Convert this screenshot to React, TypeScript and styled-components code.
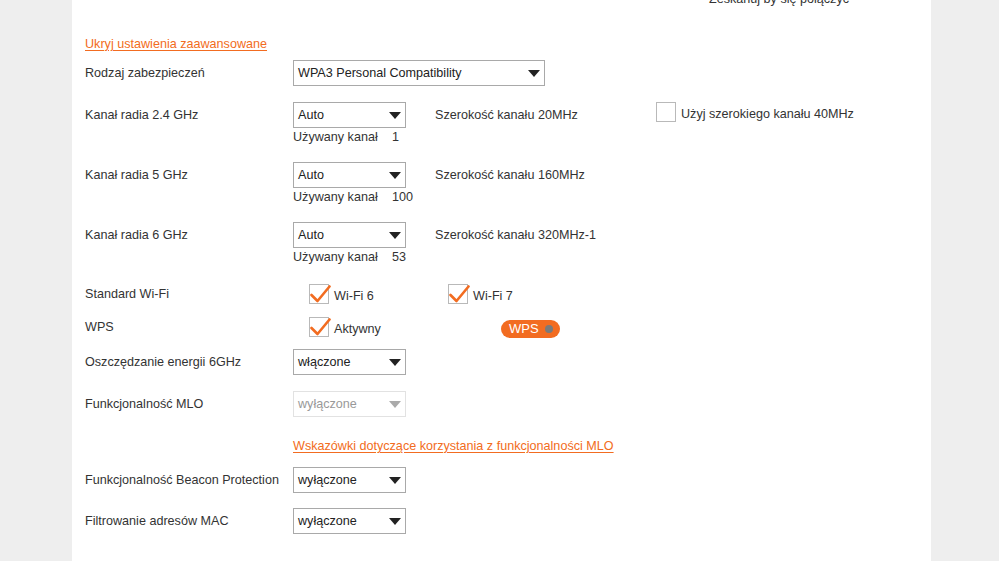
import { createGlobalStyle, styled } from "styled-components";

const orange = "#f26c21";
const text = "#333";

const GlobalStyle = createGlobalStyle`
  html, body {
    margin: 0;
    padding: 0;
    background: #eeeeee;
    overflow: hidden;
  }
  body {
    font-family: "Liberation Sans", Arial, sans-serif;
    font-size: 12.6px;
    color: ${text};
  }
`;

const Page = styled.div`
  height: 561px;
  display: flex;
`;

const Panel = styled.div`
  margin-left: 72px;
  width: 859px;
  height: 100%;
  background: #fff;
  padding-left: 13px;
  box-sizing: border-box;
  display: flex;
  flex-direction: column;
`;

const ScanHint = styled.div`
  margin-top: -10px;
  padding-left: 624px;
  line-height: 18px;
  white-space: nowrap;
`;

const Link = styled.a<{ $top: number; $indent?: number }>`
  margin-top: ${(p) => p.$top}px;
  margin-left: ${(p) => p.$indent ?? 0}px;
  line-height: 18px;
  color: ${orange};
  text-decoration: underline;
  text-underline-offset: 2px;
  cursor: pointer;
  align-self: flex-start;
`;

const Row = styled.div<{ $top: number }>`
  margin-top: ${(p) => p.$top}px;
  display: grid;
  grid-template-columns: 208px 142px 221px auto;
  align-items: start;
`;

const Label = styled.div`
  line-height: 26px;
  white-space: nowrap;
`;

const Cell = styled.div`
  display: flex;
  flex-direction: column;
`;

const Note = styled.div`
  line-height: 26px;
  white-space: nowrap;
`;

const Used = styled.div`
  line-height: 18px;
  display: flex;
  white-space: nowrap;
`;

const UsedLabel = styled.span`
  width: 99px;
`;

const SelectBox = styled.div<{ $width: number; $disabled?: boolean }>`
  width: ${(p) => p.$width}px;
  height: 26px;
  box-sizing: border-box;
  border: 1px solid ${(p) => (p.$disabled ? "#e2e2e2" : "#a9a9a9")};
  padding: 0 4px 0 4px;
  display: flex;
  align-items: center;
  justify-content: space-between;
  color: ${(p) => (p.$disabled ? "#999" : "#222")};
  background: #fff;
  cursor: ${(p) => (p.$disabled ? "default" : "pointer")};
`;

const Arrow = styled.span<{ $disabled?: boolean }>`
  width: 0;
  height: 0;
  border-left: 6px solid transparent;
  border-right: 6px solid transparent;
  border-top: 7px solid ${(p) => (p.$disabled ? "#aaa" : "#222")};
  margin-top: 1px;
`;

const Select = ({
  value,
  width = 113,
  disabled,
}: {
  value: string;
  width?: number;
  disabled?: boolean;
}) => (
  <SelectBox $width={width} $disabled={disabled}>
    <span>{value}</span>
    <Arrow $disabled={disabled} />
  </SelectBox>
);

const Options = styled.div<{ $second: number }>`
  grid-column: 2 / span 3;
  display: grid;
  grid-template-columns: ${(p) => p.$second}px auto;
  padding-left: 16px;
  align-items: center;
  height: 26px;
`;

const CheckLine = styled.label`
  display: flex;
  align-items: center;
  gap: 5px;
  white-space: nowrap;
`;

const CheckText = styled.span`
  margin-top: 3px;
`;

const Box = styled.span`
  width: 20px;
  height: 20px;
  box-sizing: border-box;
  border: 1px solid #b9b9b9;
  position: relative;
  flex-shrink: 0;
  background: #fff;
`;

const Tick = styled.svg`
  position: absolute;
  left: -1px;
  top: -2px;
`;

const Check = ({ label, checked }: { label: string; checked?: boolean }) => (
  <CheckLine>
    <Box>
      {checked && (
        <Tick width="22" height="22" viewBox="0 0 22 22">
          <path d="M2.5 12 L8.5 18 L20.5 3.5" fill="none" stroke={orange} strokeWidth="2.6" strokeLinecap="round" strokeLinejoin="round" />
        </Tick>
      )}
    </Box>
    <CheckText>{label}</CheckText>
  </CheckLine>
);

const WpsPill = styled.div`
  width: 59px;
  height: 18px;
  margin-top: 3px;
  border-radius: 9px;
  background: ${orange};
  color: #fff;
  font-size: 13px;
  box-sizing: border-box;
  padding: 0 7px 0 8px;
  display: flex;
  align-items: center;
  justify-content: space-between;
  line-height: 18px;
  cursor: pointer;
`;

const Dot = styled.span`
  width: 8px;
  height: 8px;
  border-radius: 50%;
  background: #7a7a7a;
`;

const channels = [
  { band: "2.4 GHz", width: "20MHz", used: "1", wide: true },
  { band: "5 GHz", width: "160MHz", used: "100" },
  { band: "6 GHz", width: "320MHz-1", used: "53" },
];

export default function App() {
  return (
    <Page>
      <GlobalStyle />
      <Panel>
        <ScanHint>Zeskanuj by się połączyć</ScanHint>
        <Link $top={27}>Ukryj ustawienia zaawansowane</Link>

        <Row $top={7}>
          <Label>Rodzaj zabezpieczeń</Label>
          <Select value="WPA3 Personal Compatibility" width={252} />
        </Row>

        {channels.map((c) => (
          <Row $top={16} key={c.band}>
            <Label>Kanał radia {c.band}</Label>
            <Cell>
              <Select value="Auto" />
              <Used>
                <UsedLabel>Używany kanał</UsedLabel>
                <span>{c.used}</span>
              </Used>
            </Cell>
            <Note>Szerokość kanału {c.width}</Note>
            {c.wide && <Check label="Użyj szerokiego kanału 40MHz" />}
          </Row>
        ))}

        <Row $top={15}>
          <Label>Standard Wi-Fi</Label>
          <Options $second={139}>
            <Check label="Wi-Fi 6" checked />
            <Check label="Wi-Fi 7" checked />
          </Options>
        </Row>

        <Row $top={7}>
          <Label>WPS</Label>
          <Options $second={192}>
            <Check label="Aktywny" checked />
            <WpsPill>
              WPS
              <Dot />
            </WpsPill>
          </Options>
        </Row>

        <Row $top={9}>
          <Label>Oszczędzanie energii 6GHz</Label>
          <Select value="włączone" />
        </Row>

        <Row $top={16}>
          <Label>Funkcjonalność MLO</Label>
          <Select value="wyłączone" disabled />
        </Row>

        <Link $top={20} $indent={208}>
          Wskazówki dotyczące korzystania z funkcjonalności MLO
        </Link>

        <Row $top={12}>
          <Label>Funkcjonalność Beacon Protection</Label>
          <Select value="wyłączone" />
        </Row>

        <Row $top={15}>
          <Label>Filtrowanie adresów MAC</Label>
          <Select value="wyłączone" />
        </Row>
      </Panel>
    </Page>
  );
}
